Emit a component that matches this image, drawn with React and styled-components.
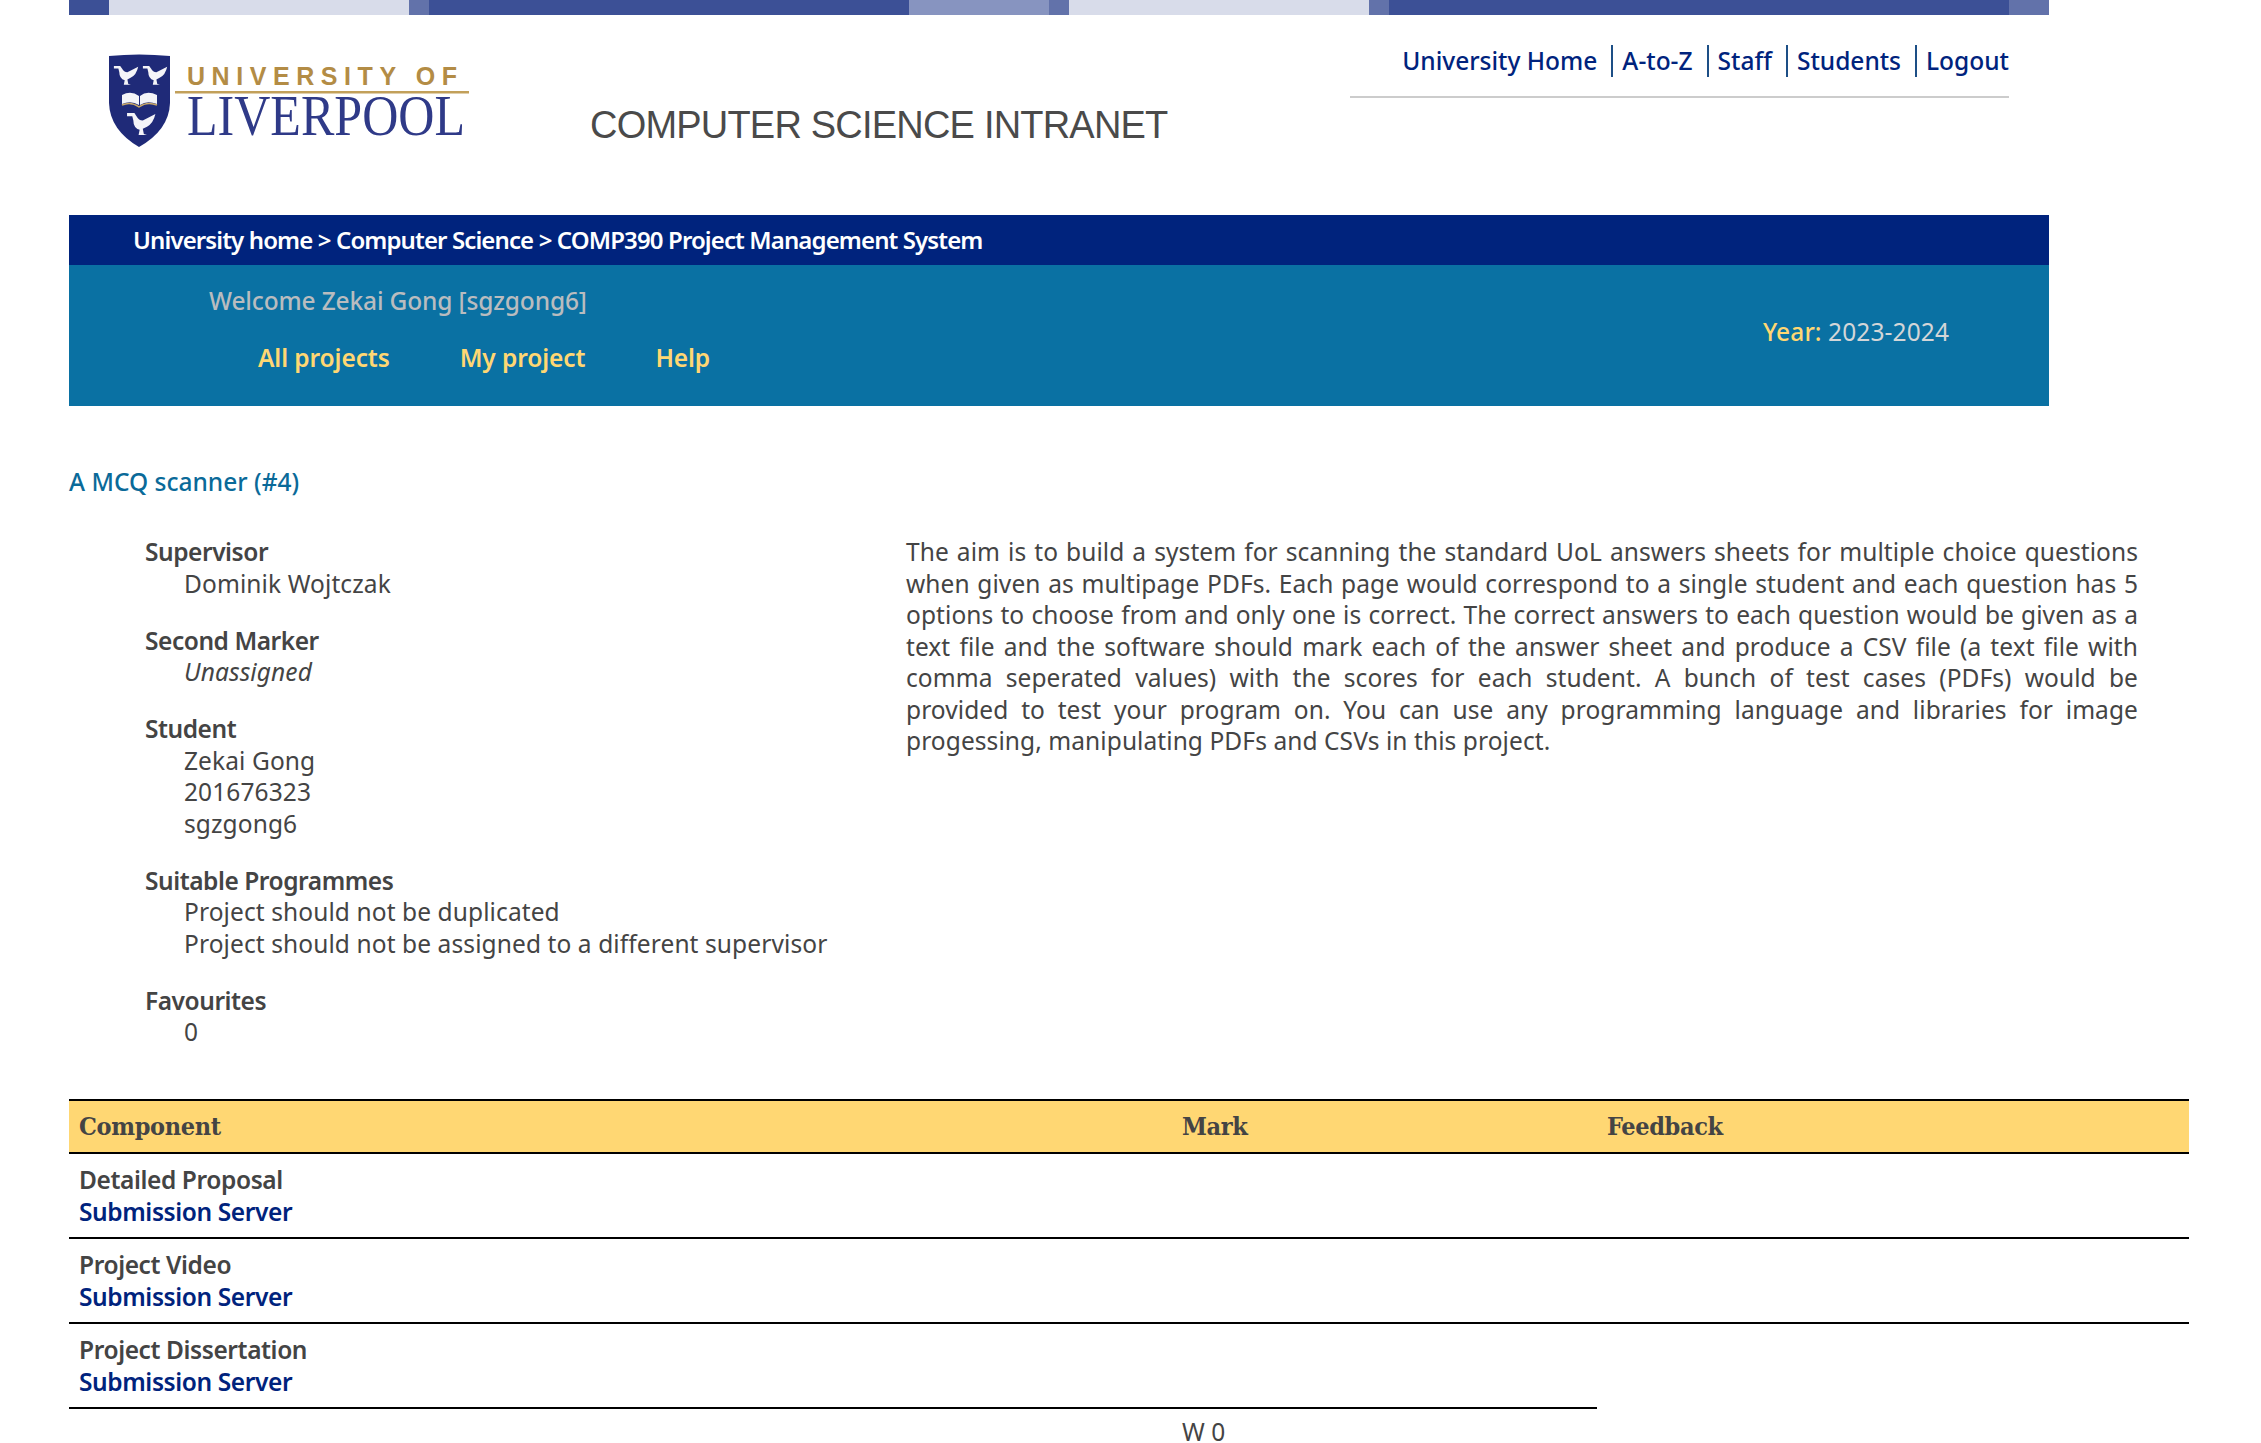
import React from 'react';
import styled, { createGlobalStyle } from 'styled-components';

const GlobalStyle = createGlobalStyle`
	html, body {
		margin: 0;
		padding: 0;
		background: #fff;
	}
	body {
		height: 1443px;
		overflow: hidden;
		font-family: 'Noto Sans', 'Open Sans', sans-serif;
		font-size: 24.5px;
		line-height: 31.5px;
		color: #444;
	}
`;

const Page = styled.div`
	padding-left: 69px;
	width: 2120px;
`;

const Masthead = styled.div`
	width: 1980px;
`;

const Stripe = styled.div`
	display: flex;
	height: 15px;
`;

const StripeBlock = styled.div`
	width: ${(p) => p.$w}px;
	background: ${(p) => p.$c};
`;

const Banner = styled.div`
	display: flex;
	height: 200px;
`;

const Logo = styled.svg`
	flex: none;
	width: 521px;
	height: 200px;
`;

const SiteTitle = styled.div`
	flex: none;
	width: 760px;
	padding-top: 88px;
	font-family: 'Liberation Sans', Arial, sans-serif;
	font-size: 38px;
	line-height: 44px;
	color: #4a4a4a;
	white-space: nowrap;
	letter-spacing: -0.8px;
`;

const TopLinks = styled.div`
	flex: none;
	width: 659px;
	height: 83px;
	box-sizing: border-box;
	border-bottom: 2px solid #ccc;
	display: flex;
	justify-content: flex-end;
	padding-top: 30px;
	font-size: 24.5px;
	font-weight: 500;
	white-space: nowrap;
`;

const TopLink = styled.a`
	color: #00237d;
	line-height: 32px;
	height: 32px;
	padding-left: ${(p) => (p.$first ? 0 : 9)}px;
	margin-left: ${(p) => (p.$first ? 0 : 14)}px;
	border-left: ${(p) => (p.$first ? 'none' : '2px solid #1d4f86')};
`;

const Breadcrumb = styled.div`
	height: 50px;
	background: #00237d;
	color: #fff;
	padding-left: 64px;
	font-size: 24px;
	font-weight: 600;
	line-height: 49px;
	letter-spacing: -0.88px;
`;

const TealBar = styled.div`
	height: 141px;
	background: #0a71a3;
	display: flex;
	justify-content: space-between;
`;

const TealLeft = styled.div`
	padding: 18px 0 0 140px;
`;

const Welcome = styled.div`
	color: #b9bcbf;
	font-size: 24.5px;
	font-weight: 500;
	line-height: 36px;
	letter-spacing: -0.15px;
`;

const MainMenu = styled.nav`
	display: flex;
	gap: 70px;
	margin: 21px 0 0 49px;
`;

const MenuLink = styled.a`
	color: #ffd773;
	font-size: 24.5px;
	font-weight: 600;
	line-height: 36px;
	letter-spacing: -0.1px;
`;

const Year = styled.div`
	padding: 49px 100px 0 0;
	color: #d3d6d8;
	font-size: 24.5px;
	line-height: 36px;
	letter-spacing: 0.1px;
`;

const YearLabel = styled.span`
	color: #ffd773;
	font-weight: 500;
`;

const ProjectTitle = styled.h2`
	margin: 58px 0 0;
	color: #0a6a99;
	font-size: 24.5px;
	font-weight: 500;
	line-height: 36px;
	letter-spacing: 0;
`;

const Details = styled.div`
	display: flex;
	margin-top: 36px;
	height: 563px;
`;

const Facts = styled.dl`
	flex: none;
	width: 837px;
	margin: 0;
	padding-left: 76px;
	box-sizing: border-box;
`;

const FactLabel = styled.dt`
	font-weight: 600;
	margin-top: 25.6px;
	letter-spacing: -0.45px;
	&:first-child {
		margin-top: 0;
	}
`;

const FactValue = styled.dd`
	margin: 0 0 0 39px;
	font-style: ${(p) => (p.$muted ? 'italic' : 'normal')};
	letter-spacing: 0.1px;
	white-space: nowrap;
`;

const Description = styled.p`
	width: 1232px;
	margin: 0;
	text-align: justify;
	letter-spacing: 0.08px;
`;

const MarksTable = styled.table`
	width: 2120px;
	table-layout: fixed;
	border-collapse: collapse;
`;

const HeadCell = styled.th`
	height: 51px;
	padding: 0 10px;
	background: #ffd773;
	border-top: 2px solid #000;
	border-bottom: 2px solid #000;
	text-align: left;
	font-family: 'DejaVu Serif Condensed', 'DejaVu Serif', serif;
	font-size: 25px;
	letter-spacing: -0.35px;
	color: #444;
`;

const Cell = styled.td`
	height: 83px;
	padding: 0 10px;
	border-bottom: ${(p) => (p.$open ? 'none' : '2px solid #000')};
	vertical-align: middle;
	font-weight: 600;
	letter-spacing: -0.4px;
`;

const PlainCell = styled.td`
	padding: 0 10px;
	height: 46px;
	letter-spacing: 0.1px;
`;

const ServerLink = styled.a`
	display: block;
	color: #00237d;
`;

const stripes = [
	[40, '#3c5096'], [300, '#d8dcea'], [20, '#6272aa'], [480, '#3c5096'], [140, '#8794c0'],
	[20, '#6272aa'], [300, '#d8dcea'], [20, '#6272aa'], [620, '#3c5096'], [40, '#6272aa'],
];

const components = ['Detailed Proposal', 'Project Video', 'Project Dissertation'];

const birdPath = 'M1 1 L8 1 L10 4 Q12 8 16 8 L28 2 Q26 11 20 14 L16 16 L17 21 L20 22 L12 22 L13 17 Q7 15 7 8 L6 4 L1 4 Z';

const UniversityLogo = () => (
	<Logo viewBox="0 0 521 200">
		<path d="M40 41 Q70 38 101 41 L101 88 Q100 115 70 132 Q41 115 40 88 Z" fill="#1f2a78" />
		<g fill="#f4f4f8">
			<path d={birdPath} transform="translate(44 50) scale(0.9)" />
			<path d={birdPath} transform="translate(73 50) scale(0.9)" />
			<path d={birdPath} transform="translate(57 97) scale(1.05)" />
			<path d="M53 80 Q62 75 70 81 L70 90 Q62 85 53 89 Z" />
			<path d="M88 80 Q78 75 71 81 L71 90 Q78 85 88 89 Z" />
		</g>
		<path d="M53 90 Q62 86 70 92 Q78 86 88 90" fill="none" stroke="#c9a868" strokeWidth="1.5" />
		<text x="118" y="70" fontFamily="'Liberation Sans', sans-serif" fontSize="25" fontWeight="700" fill="#b38c45" textLength="270">UNIVERSITY OF</text>
		<rect x="106" y="76" width="294" height="2.5" fill="#c2a05a" />
		<text x="118" y="120" fontFamily="'Liberation Serif', serif" fontSize="57" fill="#2f3a88" textLength="278" lengthAdjust="spacingAndGlyphs">LIVERPOOL</text>
	</Logo>
);

export default function App() {
	return (
		<Page>
			<GlobalStyle />
			<Masthead>
				<Stripe>
					{stripes.map(([w, c], i) => (
						<StripeBlock key={i} $w={w} $c={c} />
					))}
				</Stripe>
				<Banner>
					<UniversityLogo />
					<SiteTitle>COMPUTER SCIENCE INTRANET</SiteTitle>
					<TopLinks>
						<TopLink $first>University Home</TopLink>
						<TopLink>A-to-Z</TopLink>
						<TopLink>Staff</TopLink>
						<TopLink>Students</TopLink>
						<TopLink>Logout</TopLink>
					</TopLinks>
				</Banner>
				<Breadcrumb>University home &gt; Computer Science &gt; COMP390 Project Management System</Breadcrumb>
				<TealBar>
					<TealLeft>
						<Welcome>Welcome Zekai Gong [sgzgong6]</Welcome>
						<MainMenu>
							<MenuLink>All projects</MenuLink>
							<MenuLink>My project</MenuLink>
							<MenuLink>Help</MenuLink>
						</MainMenu>
					</TealLeft>
					<Year>
						<YearLabel>Year:</YearLabel> 2023-2024
					</Year>
				</TealBar>
			</Masthead>
			<ProjectTitle>A MCQ scanner (#4)</ProjectTitle>
			<Details>
				<Facts>
					<FactLabel>Supervisor</FactLabel>
					<FactValue>Dominik Wojtczak</FactValue>
					<FactLabel>Second Marker</FactLabel>
					<FactValue $muted>Unassigned</FactValue>
					<FactLabel>Student</FactLabel>
					<FactValue>Zekai Gong</FactValue>
					<FactValue>201676323</FactValue>
					<FactValue>sgzgong6</FactValue>
					<FactLabel>Suitable Programmes</FactLabel>
					<FactValue>Project should not be duplicated</FactValue>
					<FactValue>Project should not be assigned to a different supervisor</FactValue>
					<FactLabel>Favourites</FactLabel>
					<FactValue>0</FactValue>
				</Facts>
				<Description>
					The aim is to build a system for scanning the standard UoL answers sheets for multiple choice questions
					when given as multipage PDFs. Each page would correspond to a single student and each question has 5
					options to choose from and only one is correct. The correct answers to each question would be given as a
					text file and the software should mark each of the answer sheet and produce a CSV file (a text file with
					comma seperated values) with the scores for each student. A bunch of test cases (PDFs) would be
					provided to test your program on. You can use any programming language and libraries for image
					progessing, manipulating PDFs and CSVs in this project.
				</Description>
			</Details>
			<MarksTable>
				<colgroup>
					<col style={{ width: 1103 }} />
					<col style={{ width: 425 }} />
					<col />
				</colgroup>
				<thead>
					<tr>
						<HeadCell>Component</HeadCell>
						<HeadCell>Mark</HeadCell>
						<HeadCell>Feedback</HeadCell>
					</tr>
				</thead>
				<tbody>
					{components.map((name, i) => {
						const last = i === components.length - 1;
						return (
							<tr key={name}>
								<Cell>
									{name}
									<ServerLink>Submission Server</ServerLink>
								</Cell>
								<Cell />
								<Cell $open={last} />
							</tr>
						);
					})}
					<tr>
						<PlainCell />
						<PlainCell>W 0</PlainCell>
						<PlainCell />
					</tr>
				</tbody>
			</MarksTable>
		</Page>
	);
}
